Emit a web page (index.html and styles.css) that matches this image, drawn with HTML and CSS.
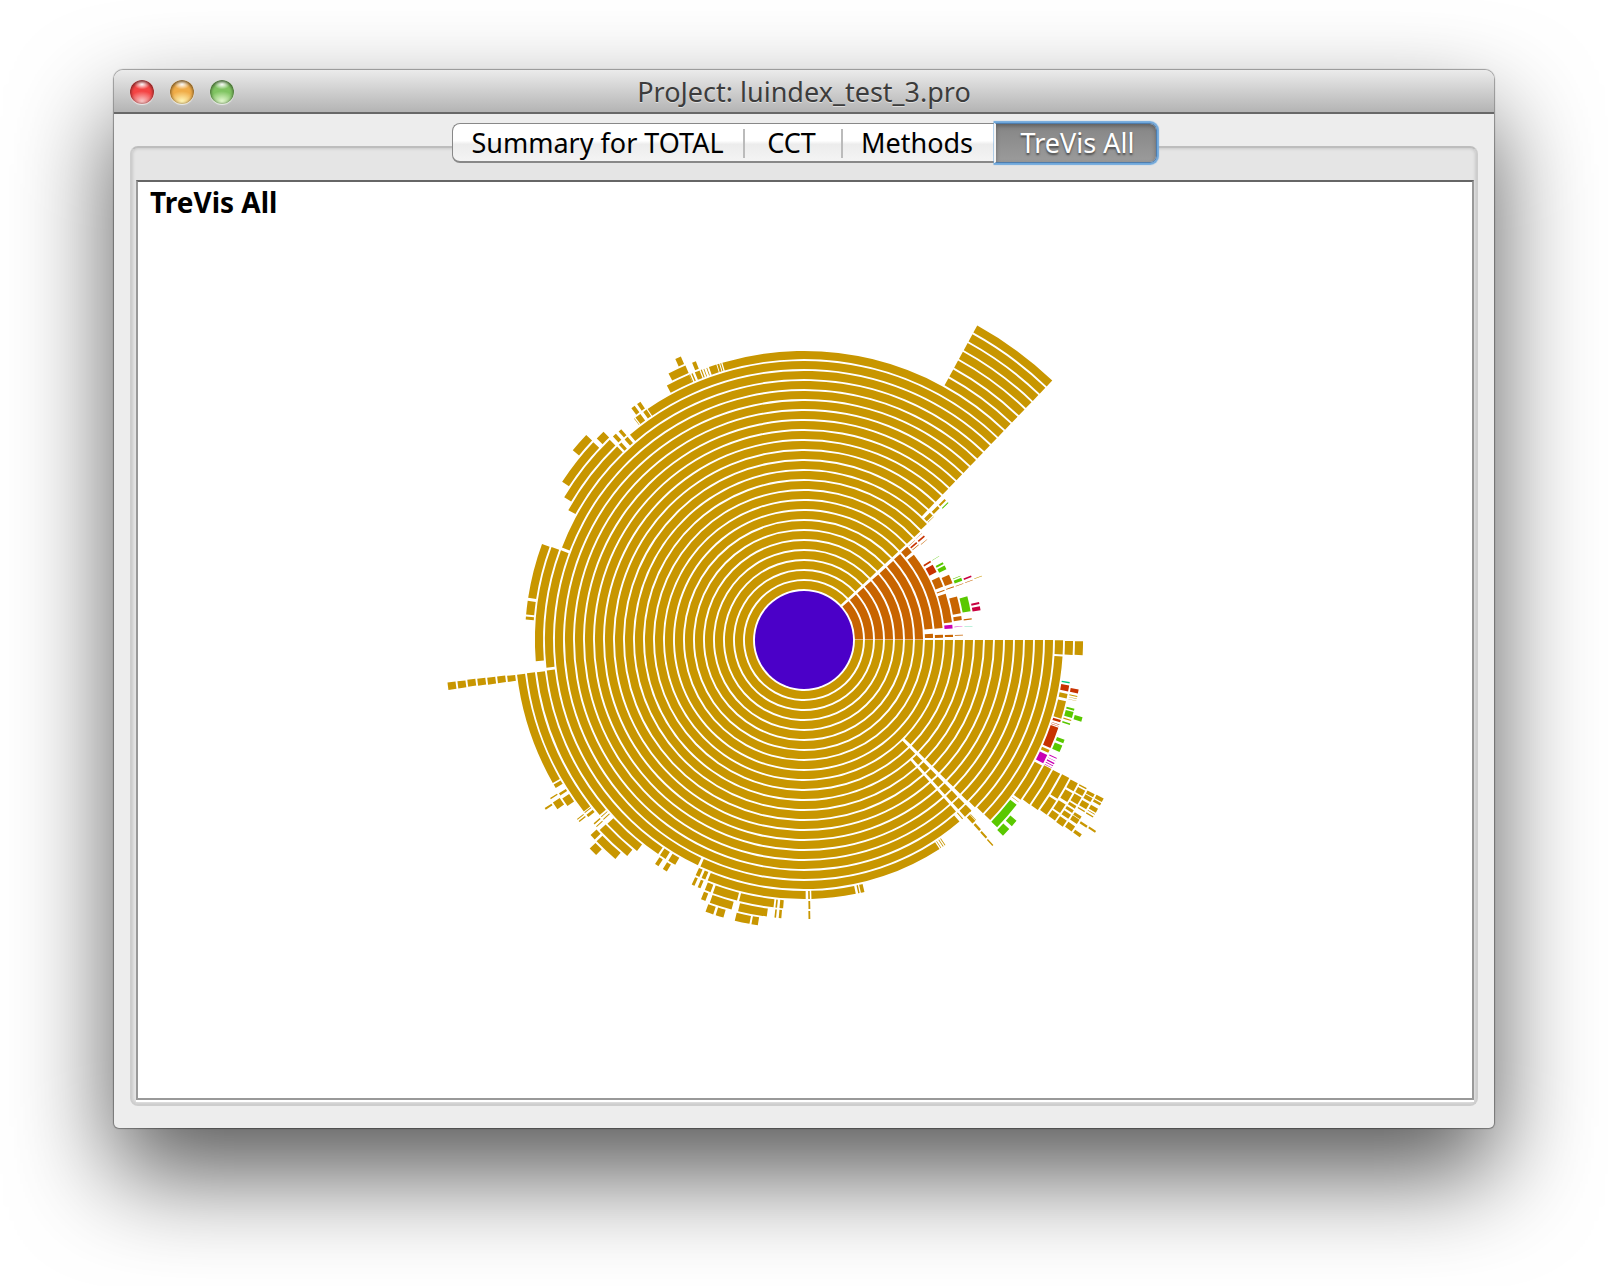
FILE: index.html
```html
<!DOCTYPE html>
<html lang="en">
<head>
<meta charset="utf-8">
<title>ProJect: luindex_test_3.pro</title>
<link rel="stylesheet" href="styles.css">
</head>
<body>
<main class="window">
  <header class="titlebar">
    <div class="lights">
      <button class="light light-close" type="button" aria-label="Close"></button>
      <button class="light light-minimize" type="button" aria-label="Minimize"></button>
      <button class="light light-zoom" type="button" aria-label="Zoom"></button>
    </div>
    <h1 class="title">ProJect: luindex_test_3.pro</h1>
  </header>
  <div class="content">
    <div class="tabs" role="tablist">
      <button class="tab tab-wide" type="button" role="tab" aria-selected="false">Summary for TOTAL</button>
      <button class="tab" type="button" role="tab" aria-selected="false">CCT</button>
      <button class="tab tab-medium" type="button" role="tab" aria-selected="false">Methods</button>
      <button class="tab tab-selected" type="button" role="tab" aria-selected="true">TreVis All</button>
    </div>
    <section class="group">
      <div class="canvas">
        <h2 class="heading">TreVis All</h2>
        <svg class="chart" id="chart" viewBox="-666 -418 1334 876" role="img" aria-label="Calling context tree"></svg>
      </div>
    </section>
  </div>
</main>
<script src="chart.js"></script>
</body>
</html>
```
FILE: styles.css
```css
* {
  box-sizing: border-box;
}

body {
  margin: 0;
  padding: 70px 114px 158px;
  background: #fff;
  color: #000;
  font-family: "Noto Sans", "Open Sans", sans-serif;
}

.window {
  border-radius: 9px 9px 5px 5px;
  background: #ededed;
  box-shadow: 0 0 1px 1px rgba(0, 0, 0, 0.35), 0 46px 100px rgba(0, 0, 0, 0.66);
}

.titlebar {
  display: grid;
  grid-template-columns: 1fr auto 1fr;
  align-items: center;
  height: 44px;
  padding: 2px 16px 0;
  border-bottom: 2px solid #686868;
  border-radius: 9px 9px 0 0;
  background: linear-gradient(#ebebeb, #d2d2d2 45%, #b4b4b4);
}

.lights {
  display: flex;
  gap: 16px;
}

.light {
  width: 24px;
  height: 24px;
  padding: 0;
  border: 0;
  border-radius: 50%;
  box-shadow: inset 0 1px 3px 1px rgba(0, 0, 0, 0.5), 0 1px 1px rgba(255, 255, 255, 0.7);
}

.light-close {
  background: radial-gradient(ellipse 8px 5px at 50% 18%, #fff, transparent), radial-gradient(ellipse 13px 10px at 50% 88%, #f8c8c8, transparent), #f44444;
}

.light-minimize {
  background: radial-gradient(ellipse 8px 5px at 50% 18%, #fff, transparent), radial-gradient(ellipse 13px 10px at 50% 88%, #fff6b8, transparent), #f0ac48;
}

.light-zoom {
  background: radial-gradient(ellipse 8px 5px at 50% 18%, #fff, transparent), radial-gradient(ellipse 13px 10px at 50% 88%, #e4f8d0, transparent), #80c462;
}

.title {
  margin: 0;
  color: #3c3c3c;
  font-size: 27px;
  font-weight: 400;
  line-height: 36px;
  text-shadow: 0 1px 0 rgba(255, 255, 255, 0.5);
}

.content {
  padding: 9px 16px 22px;
}

.tabs {
  position: relative;
  display: flex;
  width: fit-content;
  margin: 0 auto -17px;
}

.tab {
  min-width: 98px;
  height: 40px;
  padding: 0;
  border: solid #888;
  border-width: 1px 0 2px;
  background: linear-gradient(#fff 45%, #ececec 55%, #f4f4f4);
  color: #000;
  font: 400 27px/34px "Noto Sans", "Open Sans", sans-serif;
}

.tab + .tab {
  background: linear-gradient(#bbb, #bbb) 0 5px / 2px 29px no-repeat, linear-gradient(#fff 45%, #ececec 55%, #f4f4f4);
}

.tab-wide {
  min-width: 291px;
  border-left-width: 1px;
  border-radius: 8px 0 0 8px;
}

.tab-medium {
  min-width: 153px;
}

.tabs .tab-selected {
  min-width: 163px;
  padding-left: 4px;
  border: 1px solid #4f7dad;
  border-left: 2px solid #f4f4f4;
  border-radius: 0 7px 7px 0;
  background: linear-gradient(#858585, #9b9b9b) padding-box;
  box-shadow: inset 0 2px 4px rgba(0, 0, 0, 0.3), 0 0 1px 2px #6fa8dc;
  clip-path: inset(-4px -4px -4px 0);
  color: #fff;
  text-shadow: 0 2px 2px rgba(0, 0, 0, 0.5);
}

.group {
  padding: 32px 2px 4px 4px;
  border: 2px solid #cdcdcd;
  border-top-color: #bdbdbd;
  border-radius: 8px;
  background: #e5e5e5;
  box-shadow: inset 0 0 3px 1px rgba(0, 0, 0, 0.12);
}

.canvas {
  border: 2px solid #999;
  border-top-color: #666;
  background: #fff;
  box-shadow: 0 2px 0 #fff;
}

.heading {
  height: 40px;
  margin: 0;
  padding-left: 12px;
  font-size: 28px;
  font-weight: 700;
  line-height: 40px;
}

.chart {
  display: block;
  width: 100%;
  height: auto;
}
```
FILE: chart.js
```js
const HUB = 50;
const PITCH = 10;
const GAP = 0.95;
const COLORS = {
  y: "#c89600", o: "#c86400", r: "#c83200", g: "#5ac800",
  m: "#c800b4", c: "#c80040", t: "#00c87a"
};
const svg = document.getElementById("chart");
const rad = (deg) => deg * Math.PI / 180;

function add(name, attrs) {
  const node = document.createElementNS("http://www.w3.org/2000/svg", name);
  for (const key in attrs) node.setAttribute(key, attrs[key]);
  svg.appendChild(node);
}

// One frame of the tree: a ring sector running clockwise from a0 to a1.
function sector(ring, a0, a1, color) {
  const inner = HUB + ring * PITCH + GAP;
  const outer = inner + PITCH - 2 * GAP;
  const large = a1 - a0 > Math.PI ? 1 : 0;
  const p = (r, a) => (r * Math.cos(a)).toFixed(2) + " " + (r * Math.sin(a)).toFixed(2);
  add("path", {
    d: `M${p(inner, a0)}L${p(outer, a0)}A${outer} ${outer} 0 ${large} 1 ${p(outer, a1)}` +
       `L${p(inner, a1)}A${inner} ${inner} 0 ${large} 0 ${p(inner, a0)}Z`,
    fill: COLORS[color || "y"]
  });
}

// Sectors by ring range and angle in degrees; the gap is taken off both ends,
// except along the horizontal seam, where the frames meet.
const rings = [
  [0, 8, 0, 317.3], [9, 10, 0, 44.8], [9, 10, 45.3, 317.3],
  [11, 17, 0, 44.8], [11, 18, 45.3, 47.9], [11, 11, 48.2, 317], [12, 17, 48.2, 313.9],
  [18, 18, 0, 44.6], [18, 18, 49.2, 313.9],
  [19, 19, 0, 44.3], [19, 19, 56.8, 114.8], [19, 19, 115, 313.9],
  [24, 30, 298.7, 313.9],
  [0, 6, -42, 0, "o"], [7, 7, -42.3, -4.6, "o"]
];
for (const [from, to, a0, a1, color] of rings) {
  for (let ring = from; ring <= to; ring++) {
    const radius = HUB + PITCH * (ring + 0.5);
    const start = a0 === 0 ? 0.1 : GAP;
    const end = a1 === 0 ? 0.5 : GAP;
    sector(ring, rad(a0) + start / radius, rad(a1) - end / radius, color);
  }
}

// Clusters of smaller frames. Points are in thirds of a unit from the corner `at`.
// arcs: ring, start point, end point, color.  marks: center point, thickness, color.
const clusters = [
  { at: [-4, -340],
    arcs: [
      [8, 337, 768, 415, 985, "o"], [9, 428, 884, 446, 968, "o"],
      [10, 461, 892, 471, 942, "o"], [11, 491, 892, 498, 936, "g"]
    ],
    marks: [
      [385, 651, 4], [407, 630, 3], [428, 607, 2], [436, 616, 1, "g"], [393, 658, 0.4],
      [320, 756, 7, "o"], [341, 736, 1.6, "r"], [347, 742, 0.6, "o"], [335, 730, 0.4, "o"],
      [364, 716, 1.6, "r"], [372, 726, 0.4, "o"], [357, 708, 0.3, "o"],
      [383, 790, 1.6, "r"], [393, 811, 8, "r"], [412, 850, 10, "o"], [422, 875, 1, "o"],
      [445, 981, 3.6, "m"], [386, 1008, 4, "o"], [415, 1009, 3, "o"],
      [445, 1008, 2, "o"], [475, 1006, 0.8, "o"],
      [407, 775, 0.4, "g"], [419, 795, 2, "g"], [425, 808, 4, "g"], [442, 841, 9, "o"],
      [451, 864, 0.9, "o"], [472, 956, 4, "o"], [475, 980, 0.3, "m"],
      [471, 832, 0.6, "g"], [474, 842, 3, "g"], [480, 854, 0.5, "o"], [502, 958, 1.2, "o"],
      [510, 979, 0.2, "t"], [503, 833, 1.6, "c"], [507, 844, 0.4, "o"],
      [525, 912, 2, "c"], [528, 927, 4, "c"], [535, 832, 0.6]
    ] },
  { at: [36, -20],
    arcs: [
      [20, 655, 61, 655, 103], [21, 685, 63, 685, 104], [22, 716, 64, 716, 105],
      [20, 655, 109, 445, 595],
      [21, 662, 240, 647, 291], [21, 643, 319, 622, 380, "r"], [21, 597, 432, 533, 533],
      [21, 519, 546, 461, 612, "g"], [22, 624, 442, 560, 547], [23, 650, 456, 585, 564],
      [24, 676, 468, 641, 529], [24, 637, 535, 611, 578]
    ],
    marks: [
      [677, 186, 1.5, "t"], [674, 203, 6, "r"], [669, 226, 4.5], [650, 300, 2.4, "r"],
      [646, 310, 0.5, "r"], [644, 315, 0.4, "r"], [615, 389, 3], [605, 412, 9, "m"],
      [525, 538, 0.4], [703, 212, 4, "r"], [700, 227, 1], [699, 234, 0.4], [697, 240, 0.4],
      [691, 266, 2, "g"], [687, 282, 6, "g"], [682, 298, 1.2], [679, 309, 1.5, "g"],
      [660, 360, 3.6, "g"], [650, 381, 7, "g"], [639, 410, 1, "m"], [635, 418, 0.5, "m"],
      [631, 425, 1.4, "m"], [628, 432, 0.8, "m"], [625, 438, 0.5, "m"],
      [490, 629, 9, "g"], [514, 603, 7, "g"], [714, 295, 4.5, "g"],
      [384, 567, 0.8], [390, 573, 0.5], [378, 562, 0.5], [401, 593, 0.5], [393, 597, 4],
      [409, 618, 2.5], [430, 643, 2], [450, 667, 1.4], [355, 583, 0.5], [362, 589, 0.7]
    ] },
  { at: [216, 20],
    arcs: [],
    marks: [
      [156, 376, 9], [138, 406, 10], [117, 439, 10], [100, 465, 7],
      [188, 380, 1.4], [180, 394, 6], [167, 416, 8], [157, 436, 3], [148, 448, 3],
      [138, 463, 5], [124, 484, 7], [210, 401, 3.4], [203, 414, 4.4], [191, 433, 6],
      [183, 448, 1.2], [172, 467, 3], [163, 478, 5], [149, 499, 6],
      [237, 415, 4], [231, 427, 2.6], [220, 446, 4.4], [214, 457, 0.7], [208, 464, 1.4],
      [190, 493, 2.4], [173, 521, 3.6], [215, 508, 2]
    ] },
  { at: [-374, -310],
    arcs: [
      [20, 390, 660, 360, 1012], [21, 375, 655, 327, 993], [22, 345, 645, 305, 805],
      [22, 304, 814, 302, 855],
      [21, 427, 547, 565, 353], [22, 413, 508, 546, 336], [23, 407, 462, 498, 344],
      [23, 507, 332, 528, 313], [24, 438, 369, 478, 324],
      [23, 715, 175, 782, 145], [24, 719, 137, 770, 115], [23, 840, 120, 862, 113]
    ],
    marks: [
      [299, 865, 3], [578, 349, 3.4], [595, 332, 4], [560, 323, 4], [576, 308, 3.4],
      [650, 250, 4], [631, 267, 6], [620, 275, 0.5], [632, 227, 4], [615, 239, 4],
      [749, 94, 6], [784, 146, 1], [791, 142, 1.4], [805, 133, 5], [817, 128, 1.2],
      [825, 126, 0.8], [834, 124, 0.8], [868, 113, 2], [875, 110, 1], [796, 106, 4]
    ] },
  { at: [-374, -10],
    arcs: [
      [20, 690, 664, 362, 120], [21, 515, 550, 335, 125], [22, 472, 536, 303, 128],
      [23, 375, 455, 272, 133], [21, 628, 654, 540, 574], [22, 598, 670, 517, 593],
      [23, 563, 679, 508, 626]
    ],
    marks: [
      [245, 145, 6], [215, 148, 6.6], [186, 152, 7], [156, 155, 7], [126, 158, 7],
      [96, 163, 7], [66, 167, 7.4], [384, 463, 4], [400, 486, 2.4], [415, 510, 9],
      [372, 499, 1.4], [385, 521, 8], [356, 530, 2], [483, 549, 3], [474, 540, 1],
      [452, 560, 1], [458, 566, 1.4], [502, 573, 1.4], [510, 580, 1], [520, 555, 0.8],
      [528, 561, 1], [497, 613, 6], [497, 657, 9], [705, 671, 6.6], [732, 687, 8],
      [687, 695, 4], [711, 710, 4.6]
    ] },
  { at: [-164, 140],
    arcs: [
      [20, 497, 345, 207, 292], [20, 645, 330, 514, 345], [21, 294, 350, 221, 333],
      [21, 402, 369, 300, 352], [22, 278, 376, 213, 358], [22, 382, 397, 297, 382],
      [23, 331, 418, 287, 411]
    ],
    marks: [
      [178, 276, 4], [195, 285, 4], [507, 344, 1.6], [654, 327, 1.4], [665, 324, 3.6],
      [165, 303, 3], [182, 312, 3], [207, 323, 6], [410, 370, 1.6], [425, 372, 3.6],
      [508, 373, 1.8], [194, 349, 4.6], [407, 400, 1.6], [421, 403, 2.6],
      [508, 403, 1.8], [212, 388, 8], [242, 398, 8], [346, 422, 6.4],
      [895, 192, 0.6], [902, 188, 0.8], [908, 185, 0.8]
    ] }
];
for (const { at: [ox, oy], arcs, marks } of clusters) {
  for (const [ring, x0, y0, x1, y1, color] of arcs) {
    const a0 = Math.atan2(oy + y0 / 3, ox + x0 / 3);
    let a1 = Math.atan2(oy + y1 / 3, ox + x1 / 3);
    if (a1 < a0) a1 += 2 * Math.PI;
    // Arcs listed from their clockwise end are turned round.
    if (a1 - a0 > Math.PI) sector(ring, a1 - 2 * Math.PI, a0, color);
    else sector(ring, a0, a1, color);
  }
  for (const [mx, my, width, color] of marks) {
    const x = ox + mx / 3;
    const y = oy + my / 3;
    const r = Math.hypot(x, y);
    const a = Math.atan2(y, x);
    sector(Math.round((r - HUB) / PITCH - 0.5), a - width / 2 / r, a + width / 2 / r, color);
  }
}

// Long arcs of the outer rings over the top: ring, start angle, end angle.
const sweep = [[20, 200.9, 313.9], [21, 229.7, 313.9], [22, 235.9, 313.9], [23, 253.6, 313.9]];
for (const [ring, a0, a1] of sweep) sector(ring, rad(a0), rad(a1) - GAP / 270);

add("circle", { cx: 0, cy: 0, r: HUB - GAP, fill: "#4b00c8" });
```
